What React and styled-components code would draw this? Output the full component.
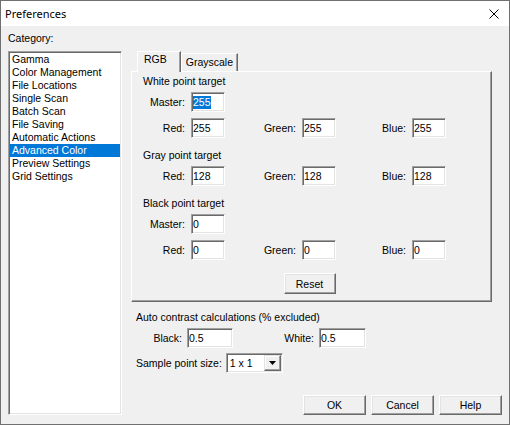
import React from 'react';
import styled, { createGlobalStyle } from 'styled-components';

const GlobalStyle = createGlobalStyle`
  html, body {
    margin: 0;
    padding: 0;
    background: #f0f0f0;
  }
`;

const Window = styled.div`
  width: 510px;
  height: 425px;
  box-sizing: border-box;
  border: 1px solid #707070;
  background: #f0f0f0;
  display: flex;
  flex-direction: column;
  font-family: 'Liberation Sans', Arial, sans-serif;
  font-size: 10.5px;
  color: #000;
`;

const TitleBar = styled.div`
  flex: none;
  height: 25px;
  background: #fff;
  display: flex;
  align-items: center;
  justify-content: space-between;
  padding: 0 10px 0 4px;
  font-family: 'Noto Sans', sans-serif;
  font-size: 11px;
`;

const Body = styled.div`
  flex: 1;
  min-height: 0;
  display: grid;
  grid-template-columns: 114px 1fr;
  grid-template-rows: auto 1fr;
  column-gap: 9px;
  padding: 6px 7px 9px 7px;
`;

const Caption = styled.div`
  grid-column: 1;
  grid-row: 1;
  line-height: 13px;
  margin-bottom: 6px;
`;

const ListBox = styled.ul`
  grid-column: 1;
  grid-row: 2;
  margin: 0;
  padding: 1px;
  list-style: none;
  background: #fff;
  border: 1px solid;
  border-color: #a0a0a0 #fff #fff #a0a0a0;
  box-shadow: inset 1px 1px 0 #696969, inset -1px -1px 0 #e3e3e3;
`;

const ListItem = styled.li`
  line-height: 13px;
  padding-left: 2px;
  white-space: nowrap;
  background: ${(p) => (p.$selected ? '#0078d7' : 'transparent')};
  color: ${(p) => (p.$selected ? '#fff' : '#000')};
`;

const RightCol = styled.div`
  grid-column: 2;
  grid-row: 2;
  display: flex;
  flex-direction: column;
`;

const TabStrip = styled.div`
  height: 20px;
  display: flex;
  align-items: flex-end;
  padding-left: 6px;
`;

const Tab = styled.div`
  box-sizing: border-box;
  height: ${(p) => (p.$active ? 21 : 18)}px;
  margin-bottom: ${(p) => (p.$active ? -1 : 0)}px;
  padding: ${(p) => (p.$active ? '1px 13px 0 6px' : '2px 4px 0 4px')};
  line-height: 13px;
  background: #f0f0f0;
  border: 1px solid;
  border-bottom: none;
  border-color: #fff #696969 transparent #fff;
  box-shadow: inset -1px 0 0 #a0a0a0;
  position: relative;
  z-index: ${(p) => (p.$active ? 1 : 0)};
`;

const TabPanel = styled.div`
  width: 361px;
  box-sizing: border-box;
  border: 1px solid;
  border-color: #fff #696969 #696969 #fff;
  box-shadow: inset -1px -1px 0 #a0a0a0;
  padding: 3px 11px 7px 11px;
`;

const Group = styled.div`
  & + & {
    margin-top: 11px;
  }
`;

const GroupTitle = styled.div`
  line-height: 13px;
  margin-bottom: 4px;
  padding-left: ${(p) => p.$indent || 0}px;
`;

const Rows = styled.div`
  display: flex;
  flex-direction: column;
  gap: 6px;
`;

const FieldRow = styled.div`
  display: grid;
  grid-template-columns: ${(p) => p.$cols};
  align-items: center;
  padding-left: ${(p) => p.$indent || 0}px;
`;

const FieldLabel = styled.label`
  text-align: right;
  padding-right: ${(p) => p.$pad || 6}px;
  white-space: nowrap;
  line-height: 13px;
`;

const Field = styled.div`
  box-sizing: border-box;
  height: 20px;
  background: #fff;
  border: 1px solid;
  border-color: #a0a0a0 #fff #fff #a0a0a0;
  box-shadow: inset 1px 1px 0 #696969, inset -1px -1px 0 #e3e3e3;
  padding-left: 1px;
  display: flex;
  align-items: center;
  line-height: 13px;
  overflow: hidden;
  white-space: nowrap;
`;

const Selected = styled.span`
  background: #0078d7;
  color: #fff;
`;

const CenterBar = styled.div`
  display: flex;
  justify-content: center;
  margin-top: 13px;
  padding-right: 4px;
`;

const PushButton = styled.button`
  box-sizing: border-box;
  width: ${(p) => p.$w}px;
  height: ${(p) => p.$h || 20}px;
  padding: 0;
  background: #f0f0f0;
  border: 1px solid;
  border-color: #fff #696969 #696969 #fff;
  box-shadow: inset -1px -1px 0 #a0a0a0, inset 1px 1px 0 #e3e3e3;
  font: inherit;
  color: #000;
`;

const Contrast = styled.div`
  margin-top: 9px;
`;

const SampleRow = styled.div`
  display: flex;
  align-items: center;
  gap: 4px;
  margin-top: 5px;
  padding-left: 5px;
  line-height: 13px;
`;

const Combo = styled.div`
  box-sizing: border-box;
  width: 57px;
  height: 20px;
  padding: 1px;
  background: #fff;
  border: 1px solid;
  border-color: #a0a0a0 #fff #fff #a0a0a0;
  box-shadow: inset 1px 1px 0 #696969, inset -1px -1px 0 #e3e3e3;
  display: flex;
  align-items: center;
`;

const ComboText = styled.div`
  flex: 1;
  padding-left: 2px;
  line-height: 13px;
`;

const DropButton = styled.div`
  box-sizing: border-box;
  width: 17px;
  height: 16px;
  background: #f0f0f0;
  border: 1px solid;
  border-color: #e3e3e3 #696969 #696969 #e3e3e3;
  box-shadow: inset -1px -1px 0 #a0a0a0, inset 1px 1px 0 #fff;
  display: flex;
  align-items: center;
  justify-content: center;
`;

const ButtonBar = styled.div`
  margin-top: auto;
  display: flex;
  justify-content: flex-end;
  gap: 5px;
`;

const categories = [
  'Gamma',
  'Color Management',
  'File Locations',
  'Single Scan',
  'Batch Scan',
  'File Saving',
  'Automatic Actions',
  'Advanced Color',
  'Preview Settings',
  'Grid Settings',
];

const pointCols = '48px 34px 77px 34px 76px 34px';

function RgbRow({ values }) {
  return (
    <FieldRow $cols={pointCols}>
      <FieldLabel>Red:</FieldLabel>
      <Field>{values[0]}</Field>
      <FieldLabel>Green:</FieldLabel>
      <Field>{values[1]}</Field>
      <FieldLabel>Blue:</FieldLabel>
      <Field>{values[2]}</Field>
    </FieldRow>
  );
}

export default function App() {
  return (
    <>
      <GlobalStyle />
      <Window>
        <TitleBar>
          <span>Preferences</span>
          <svg width='10' height='10' viewBox='0 0 10 10'>
            <path d='M0.5 0.5 L9.5 9.5 M9.5 0.5 L0.5 9.5' stroke='#000' strokeWidth='1' />
          </svg>
        </TitleBar>
        <Body>
          <Caption>Category:</Caption>
          <ListBox>
            {categories.map((c) => (
              <ListItem key={c} $selected={c === 'Advanced Color'}>
                {c}
              </ListItem>
            ))}
          </ListBox>
          <RightCol>
            <TabStrip>
              <Tab $active>RGB</Tab>
              <Tab>Grayscale</Tab>
            </TabStrip>
            <TabPanel>
              <Group>
                <GroupTitle>White point target</GroupTitle>
                <Rows>
                  <FieldRow $cols={pointCols}>
                    <FieldLabel>Master:</FieldLabel>
                    <Field>
                      <Selected>255</Selected>
                    </Field>
                  </FieldRow>
                  <RgbRow values={['255', '255', '255']} />
                </Rows>
              </Group>
              <Group>
                <GroupTitle>Gray point target</GroupTitle>
                <Rows>
                  <RgbRow values={['128', '128', '128']} />
                </Rows>
              </Group>
              <Group>
                <GroupTitle>Black point target</GroupTitle>
                <Rows>
                  <FieldRow $cols={pointCols}>
                    <FieldLabel>Master:</FieldLabel>
                    <Field>0</Field>
                  </FieldRow>
                  <RgbRow values={['0', '0', '0']} />
                </Rows>
              </Group>
              <CenterBar>
                <PushButton $w={52} $h={21}>
                  Reset
                </PushButton>
              </CenterBar>
            </TabPanel>
            <Contrast>
              <GroupTitle $indent={5}>Auto contrast calculations (% excluded)</GroupTitle>
              <FieldRow $cols='51px 46px 86px 47px' $indent={5}>
                <FieldLabel $pad={5}>Black:</FieldLabel>
                <Field>0.5</Field>
                <FieldLabel $pad={5}>White:</FieldLabel>
                <Field>0.5</Field>
              </FieldRow>
            </Contrast>
            <SampleRow>
              <span>Sample point size:</span>
              <Combo>
                <ComboText>1 x 1</ComboText>
                <DropButton>
                  <svg width='7' height='4' viewBox='0 0 7 4'>
                    <polygon points='0,0 7,0 3.5,4' fill='#000' />
                  </svg>
                </DropButton>
              </Combo>
            </SampleRow>
            <ButtonBar>
              <PushButton $w={63}>OK</PushButton>
              <PushButton $w={63}>Cancel</PushButton>
              <PushButton $w={63}>Help</PushButton>
            </ButtonBar>
          </RightCol>
        </Body>
      </Window>
    </>
  );
}
